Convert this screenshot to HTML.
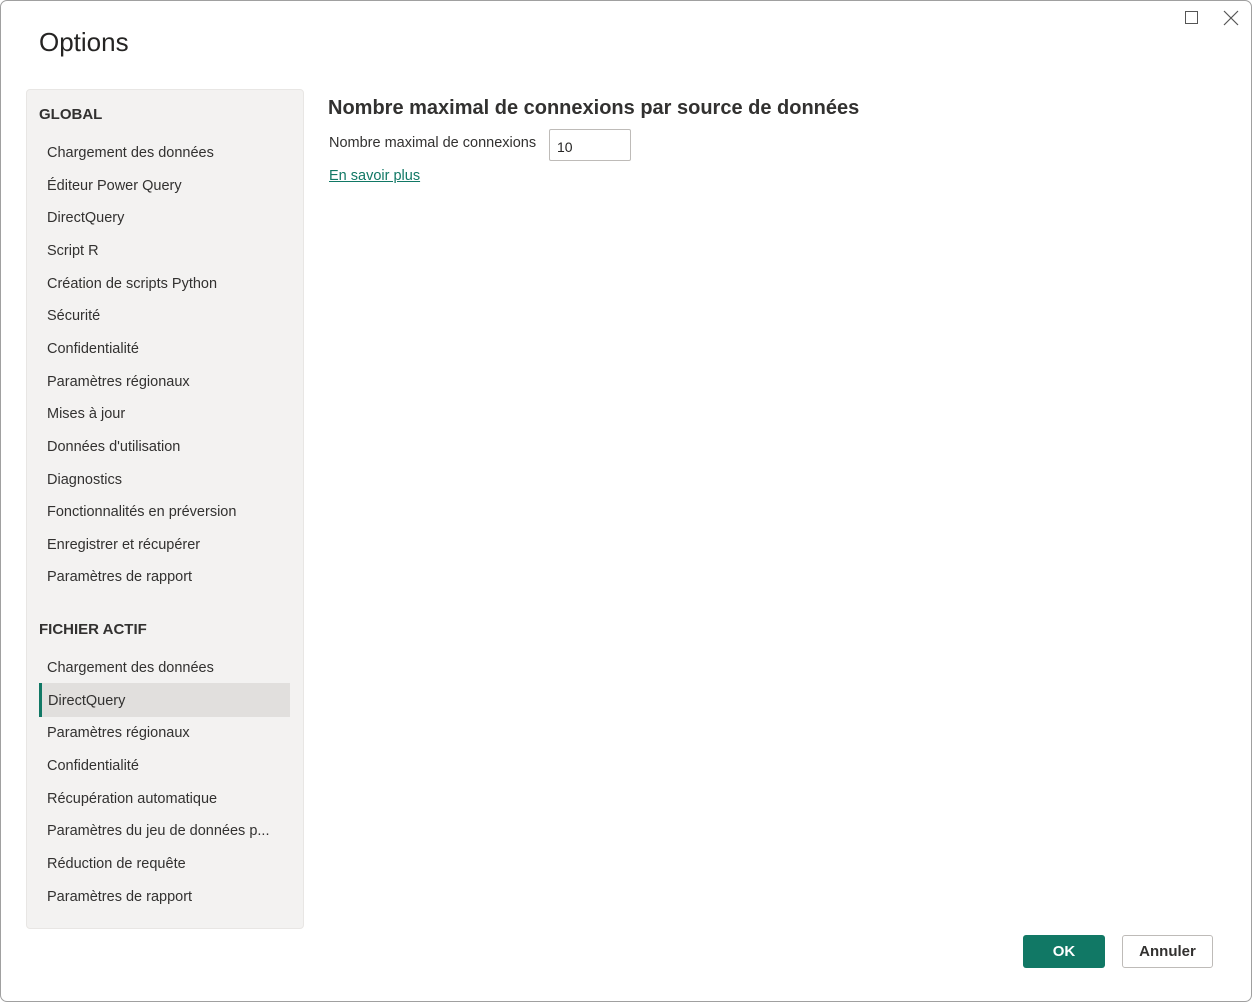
<!DOCTYPE html>
<html><head><meta charset="utf-8"><style>
*{margin:0;padding:0;box-sizing:border-box}
body{width:1252px;height:1002px;background:#fff;font-family:"Liberation Sans",sans-serif;color:#252423;position:relative;overflow:hidden}
.win{position:absolute;left:0;top:0;width:1252px;height:1002px;border:1px solid #a0a0a0;border-radius:7px;background:#fff}
.in{position:absolute;left:-1px;top:-1px;width:1252px;height:1002px}
.title{position:absolute;left:39px;top:27px;font-size:26px;color:#252423}
.side{position:absolute;left:26px;top:89px;width:278px;height:840px;background:#f3f2f1;border-radius:4px;border:1px solid #e8e6e4}
.h{position:absolute;left:12px;font-size:15px;font-weight:bold;color:#323130}
.it{position:absolute;left:20px;font-size:14.5px;color:#323130;line-height:20px;white-space:nowrap}
.sel{position:absolute;left:12px;top:593px;width:251px;height:34px;background:#e1dfdd;border-left:3px solid #117865}
.main h2{position:absolute;left:328px;top:97px;font-size:20px;font-weight:bold;color:#323130}
.lbl{position:absolute;left:329px;top:135px;font-size:14.5px;color:#323130}
.inp{position:absolute;left:549px;top:129px;width:82px;height:32px;border:1px solid #bebbb8;border-radius:2px;font-size:14px;padding:9px 0 0 7px}
.link{position:absolute;left:329px;top:168px;font-size:14.5px;color:#117865;text-decoration:underline}
.ok{position:absolute;left:1023px;top:935px;width:82px;height:33px;background:#117865;border-radius:3px;color:#fff;font-weight:bold;font-size:15px;text-align:center;line-height:33px}
.cn{position:absolute;left:1122px;top:935px;width:91px;height:33px;border:1px solid #bebbb8;border-radius:3px;font-weight:bold;font-size:15px;text-align:center;line-height:31px;color:#323130}
</style></head><body><div class="win"><div class="in">
<div class="title">Options</div>
<svg style="position:absolute;left:1183px;top:9px" width="16" height="16"><rect x="2.5" y="2.5" width="12" height="12" fill="none" stroke="#555" stroke-width="1"/></svg>
<svg style="position:absolute;left:1222px;top:9px" width="18" height="18"><path d="M2 2L16 16M16 2L2 16" stroke="#555" stroke-width="1.2"/></svg>
<div class="side">
<div class="h" style="top:16px">GLOBAL</div>
<div class="it" style="top:53px">Chargement des données</div>
<div class="it" style="top:86px">Éditeur Power Query</div>
<div class="it" style="top:118px">DirectQuery</div>
<div class="it" style="top:151px">Script R</div>
<div class="it" style="top:184px">Création de scripts Python</div>
<div class="it" style="top:216px">Sécurité</div>
<div class="it" style="top:249px">Confidentialité</div>
<div class="it" style="top:282px">Paramètres régionaux</div>
<div class="it" style="top:314px">Mises à jour</div>
<div class="it" style="top:347px">Données d'utilisation</div>
<div class="it" style="top:380px">Diagnostics</div>
<div class="it" style="top:412px">Fonctionnalités en préversion</div>
<div class="it" style="top:445px">Enregistrer et récupérer</div>
<div class="it" style="top:477px">Paramètres de rapport</div>
<div class="h" style="top:531px">FICHIER ACTIF</div>
<div class="it" style="top:568px">Chargement des données</div>
<div class="sel"></div>
<div class="it" style="top:601px;left:21px">DirectQuery</div>
<div class="it" style="top:633px">Paramètres régionaux</div>
<div class="it" style="top:666px">Confidentialité</div>
<div class="it" style="top:699px">Récupération automatique</div>
<div class="it" style="top:731px">Paramètres du jeu de données p...</div>
<div class="it" style="top:764px">Réduction de requête</div>
<div class="it" style="top:797px">Paramètres de rapport</div>
</div>
<div class="main">
<h2>Nombre maximal de connexions par source de données</h2>
<div class="lbl">Nombre maximal de connexions</div>
<div class="inp">10</div>
<div class="link">En savoir plus</div>
</div>
<div class="ok">OK</div>
<div class="cn">Annuler</div>
</div></div></body></html>
